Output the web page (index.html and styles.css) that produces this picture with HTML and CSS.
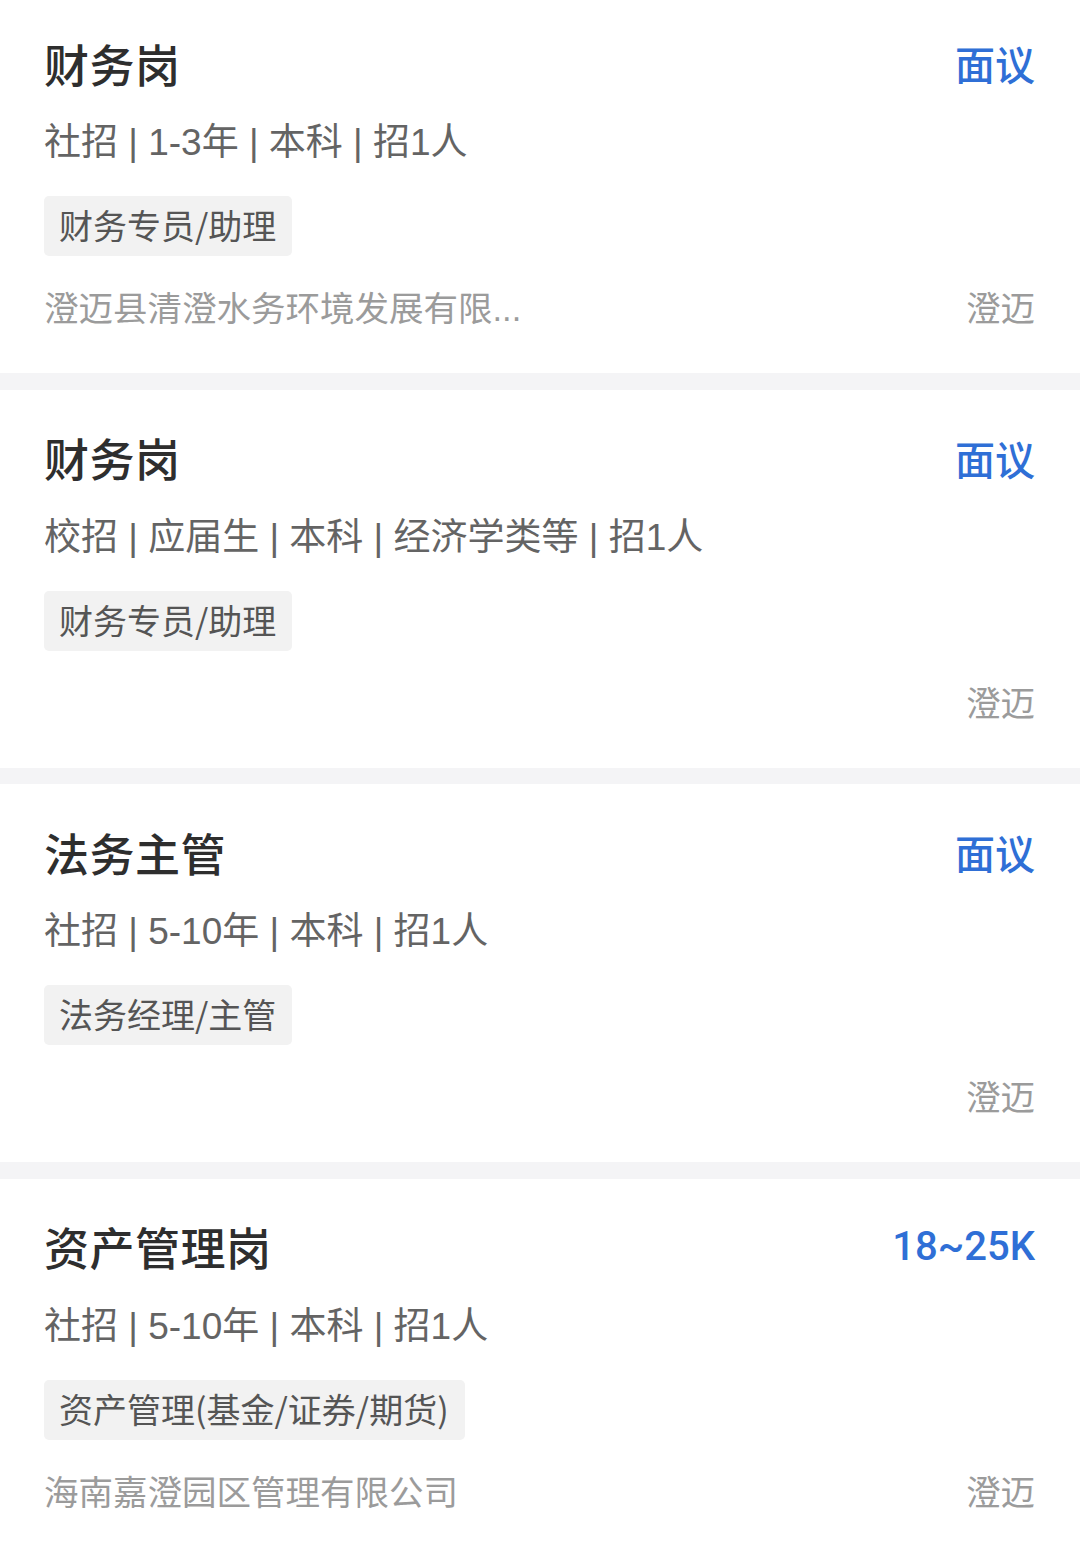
FILE: index.html
```html
<!DOCTYPE html>
<html lang="zh-CN">
<head>
<meta charset="utf-8">
<title>职位列表</title>
<link rel="stylesheet" href="styles.css">
</head>
<body>
<div class="list">
  <div class="card first">
    <div class="row head">
      <div class="title">财务岗</div>
      <div class="salary">面议</div>
    </div>
    <div class="meta">社招 | 1-3年 | 本科 | 招1人</div>
    <div class="tags"><span class="tag">财务专员/助理</span></div>
    <div class="row foot">
      <div class="company">澄迈县清澄水务环境发展有限...</div>
      <div class="loc">澄迈</div>
    </div>
  </div>
  <div class="card">
    <div class="row head">
      <div class="title">财务岗</div>
      <div class="salary">面议</div>
    </div>
    <div class="meta">校招 | 应届生 | 本科 | 经济学类等 | 招1人</div>
    <div class="tags"><span class="tag">财务专员/助理</span></div>
    <div class="row foot">
      <div class="company"></div>
      <div class="loc">澄迈</div>
    </div>
  </div>
  <div class="card">
    <div class="row head">
      <div class="title">法务主管</div>
      <div class="salary">面议</div>
    </div>
    <div class="meta">社招 | 5-10年 | 本科 | 招1人</div>
    <div class="tags"><span class="tag">法务经理/主管</span></div>
    <div class="row foot">
      <div class="company"></div>
      <div class="loc">澄迈</div>
    </div>
  </div>
  <div class="card">
    <div class="row head">
      <div class="title">资产管理岗</div>
      <div class="salary num">18~25K</div>
    </div>
    <div class="meta">社招 | 5-10年 | 本科 | 招1人</div>
    <div class="tags"><span class="tag">资产管理(基金/证券/期货)</span></div>
    <div class="row foot">
      <div class="company">海南嘉澄园区管理有限公司</div>
      <div class="loc">澄迈</div>
    </div>
  </div>
</div>
</body>
</html>
```
FILE: styles.css
```css
html, body {
  margin: 0;
  padding: 0;
  background: #f4f4f6;
}
body {
  font-family: "Liberation Sans", "Noto Sans CJK SC", sans-serif;
  overflow: hidden;
  height: 1546px;
}
.list {
  display: flex;
  flex-direction: column;
  gap: 16.5px;
}
.card {
  background: #ffffff;
  height: 378px;
  box-sizing: border-box;
  padding: 40px 45px 0 44px;
  display: flex;
  flex-direction: column;
}
.card.first {
  margin-top: -5px;
}
.row {
  display: flex;
  justify-content: space-between;
  align-items: center;
}
.head {
  height: 56px;
}
.title {
  font-size: 45px;
  font-weight: 500;
  color: #2e2e2e;
  letter-spacing: 0.5px;
}
.salary {
  font-size: 40px;
  font-weight: 500;
  color: #2f6fd6;
}
.salary.num {
  font-family: Roboto, "Noto Sans CJK SC", sans-serif;
  font-size: 40px;
  font-weight: 500;
}
.meta {
  margin-top: 27px;
  height: 50px;
  line-height: 50px;
  font-size: 37px;
  color: #646464;
}
.tags {
  margin-top: 28px;
  display: flex;
}
.tag {
  height: 60px;
  line-height: 58px;
  padding: 0 16px 0 15px;
  background: #f2f2f2;
  border-radius: 5px;
  font-family: "Noto Sans CJK SC", sans-serif;
  font-size: 34px;
  color: #555555;
}
.foot {
  margin-top: 27px;
  height: 46px;
}
.company, .loc {
  font-size: 34.5px;
  color: #9b9b9b;
}
```
